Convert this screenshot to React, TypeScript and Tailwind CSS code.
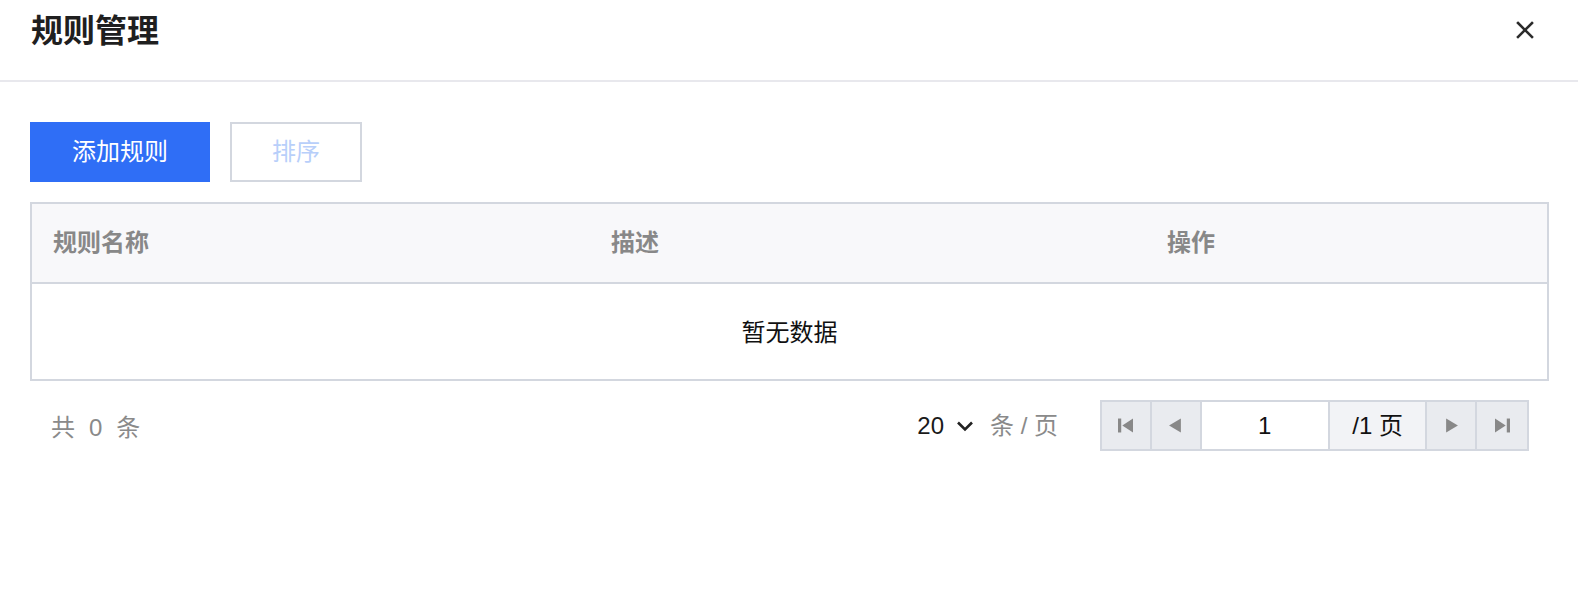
import React from "react";

const font = { fontFamily: '"Liberation Sans", "Noto Sans CJK SC", sans-serif' };

const columns = [
  { header: "规则名称", className: "w-[558px]" },
  { header: "描述", className: "w-[556px]" },
  { header: "操作", className: "flex-1" },
];

const Triangle = ({ dir, bar }: { dir: "left" | "right"; bar?: boolean }) => (
  <svg width="15" height="15" viewBox="0 0 14 14" fill="#888">
    {dir === "left" ? (
      <>
        {bar && <rect x="0" y="0.5" width="3" height="13" />}
        <polygon points={bar ? "14,0.5 14,13.5 4,7" : "12,0.5 12,13.5 1,7"} />
      </>
    ) : (
      <>
        <polygon points={bar ? "0,0.5 0,13.5 10,7" : "2,0.5 2,13.5 13,7"} />
        {bar && <rect x="11" y="0.5" width="3" height="13" />}
      </>
    )}
  </svg>
);

const PageButton = ({ children }: { children: React.ReactNode }) => (
  <div className="w-[50px] h-full flex items-center justify-center bg-[#e9ebef]">{children}</div>
);

const App = () => {
  return (
    <div className="w-[1578px] h-[592px] bg-white text-[#222]" style={font}>
      <header className="h-[82px] border-b-2 border-[#e8e8ed] flex items-start justify-between pl-[31px] pr-[44px]">
        <h1 className="pt-[15px] text-[32px] leading-[32px] font-bold text-[#1f1f1f]">规则管理</h1>
        <button className="mt-[21px] w-[18px] h-[18px]">
          <svg width="18" height="18" viewBox="0 0 18 18" stroke="#2b2b2b" strokeWidth="2.6" strokeLinecap="square">
            <line x1="2" y1="2" x2="16" y2="16" />
            <line x1="16" y1="2" x2="2" y2="16" />
          </svg>
        </button>
      </header>

      <section className="pl-[30px] pr-[29px] pt-[40px]">
        <div className="flex gap-[20px]">
          <button className="w-[180px] h-[60px] bg-[#2f6ef6] text-white text-[24px]">添加规则</button>
          <button className="w-[132px] h-[60px] border-2 border-[#d3d7df] text-[#b8cffa] text-[24px]">排序</button>
        </div>

        <div className="mt-[20px] border-2 border-[#d3d7df]">
          <div className="flex h-[80px] bg-[#f8f8fa] border-b-2 border-[#d3d7df]">
            {columns.map((col) => (
              <div key={col.header} className={`${col.className} flex items-center pl-[21px] text-[24px] font-bold text-[#888]`}>
                {col.header}
              </div>
            ))}
          </div>
          <div className="h-[95px] pt-[3px] flex items-center justify-center text-[24px] text-[#111]">暂无数据</div>
        </div>

        <div className="mt-[19px] flex items-center justify-between pl-[21px] pr-[20px]">
          <div className="flex items-center gap-[14px] pt-[4px] text-[24px] text-[#8a8a8a]">
            <span>共</span>
            <span>0</span>
            <span>条</span>
          </div>
          <div className="flex items-center">
            <div className="flex items-center text-[24px]">
              <span className="text-[#1a1a1a]">20</span>
              <svg className="ml-[12px]" width="18" height="12" viewBox="0 0 18 12" fill="none" stroke="#222" strokeWidth="2.6">
                <polyline points="2,2.5 9,9.5 16,2.5" />
              </svg>
              <span className="ml-[16px] text-[#8a8a8a]">条 / 页</span>
            </div>
            <div className="ml-[42px] h-[51px] w-[429px] flex border-2 border-[#d3d7df] divide-x-2 divide-[#d3d7df]">
              <PageButton><Triangle dir="left" bar /></PageButton>
              <PageButton><Triangle dir="left" /></PageButton>
              <div className="w-[129px] h-full flex items-center justify-center bg-white text-[24px] text-[#111]">1</div>
              <div className="w-[98px] h-full flex items-center justify-center bg-[#f2f3f6] text-[24px] text-[#111]">/1 页</div>
              <PageButton><Triangle dir="right" /></PageButton>
              <PageButton><Triangle dir="right" bar /></PageButton>
            </div>
          </div>
        </div>
      </section>
    </div>
  );
};

export default App;
